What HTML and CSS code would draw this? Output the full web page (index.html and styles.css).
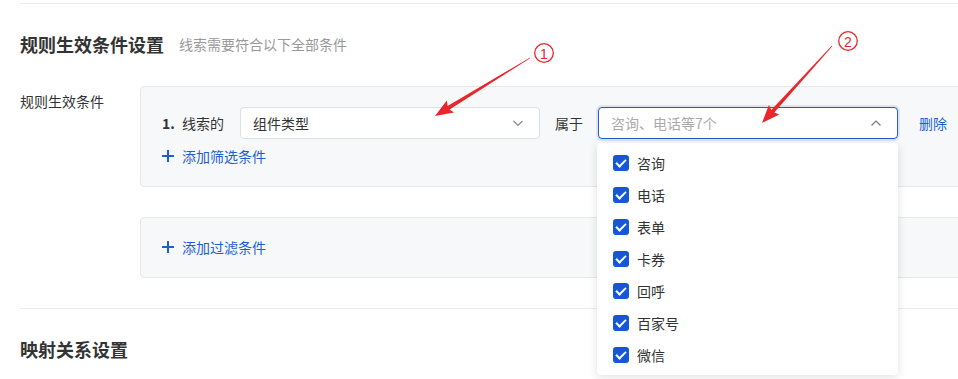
FILE: index.html
```html
<!DOCTYPE html>
<html>
<head>
    <title>规则设置</title>
    <link rel="stylesheet" href="styles.css">
</head>
<body>
    <div class="page">
        <div class="divider top"></div>

        <div class="section-head">
            <h2>规则生效条件设置</h2>
            <span class="hint">线索需要符合以下全部条件</span>
        </div>

        <div class="form-row">
            <div class="form-label">规则生效条件</div>
            <div class="form-body">
                <div class="cond-box">
                    <div class="cond-row">
                        <span class="cond-no">1.</span>
                        <span class="cond-text first">线索的</span>
                        <div class="select">
                            <span class="select-value">组件类型</span>
                            <svg class="chevron" width="12" height="12" viewBox="0 0 12 12"><polyline points="1.5,4 6,8.5 10.5,4" fill="none" stroke="#888" stroke-width="1.2"/></svg>
                        </div>
                        <span class="cond-text">属于</span>
                        <div class="select-wrap">
                            <div class="select active">
                                <span class="select-placeholder">咨询、电话等7个</span>
                                <svg class="chevron" width="12" height="12" viewBox="0 0 12 12"><polyline points="1.5,8.5 6,4 10.5,8.5" fill="none" stroke="#777" stroke-width="1.2"/></svg>
                            </div>
                            <ul class="dropdown">
                                <li><span class="checkbox"></span>咨询</li>
                                <li><span class="checkbox"></span>电话</li>
                                <li><span class="checkbox"></span>表单</li>
                                <li><span class="checkbox"></span>卡券</li>
                                <li><span class="checkbox"></span>回呼</li>
                                <li><span class="checkbox"></span>百家号</li>
                                <li><span class="checkbox"></span>微信</li>
                            </ul>
                        </div>
                        <a class="link del">删除</a>
                    </div>
                    <a class="link add"><span class="plus"></span>添加筛选条件</a>
                </div>

                <div class="cond-box filter">
                    <a class="link add"><span class="plus"></span>添加过滤条件</a>
                </div>
            </div>
        </div>

        <div class="divider"></div>

        <div class="section-head second">
            <h2>映射关系设置</h2>
        </div>

        <!-- annotation arrows drawn over the screenshot -->
        <svg class="marks" width="958" height="379" viewBox="0 0 958 379">
            <polygon fill="#e8262b" points="530.2,58.3 449.6,109.4 454.0,112.6 435,116 446.8,100.6 447.6,106.0 529.8,57.7"/>
            <polygon fill="#e8262b" points="832.3,46.3 774.3,112.5 779.3,114.4 762,123 768.9,105.0 771.3,109.9 831.7,45.7"/>
            <circle cx="544" cy="53" r="9.3" fill="none" stroke="#e8262b" stroke-width="1.3"/>
            <text x="544" y="58.5" class="mark-num">1</text>
            <circle cx="848" cy="41" r="9.3" fill="none" stroke="#e8262b" stroke-width="1.3"/>
            <text x="848" y="46.5" class="mark-num">2</text>
        </svg>
    </div>
</body>
</html>
```

FILE: styles.css
```css
html, body { margin: 0; height: 379px; overflow: hidden; }
body { font-family: "Noto Sans CJK SC", "Noto Sans", sans-serif; color: #333; font-size: 14px; background: #fff; }
.page { position: relative; box-sizing: border-box; width: 958px; height: 379px; overflow: hidden; padding-left: 20px; }
.divider { height: 1px; background: #ebebeb; margin-top: 30px; }
.divider.top { margin-top: 3px; }

.section-head { display: flex; align-items: center; height: 24px; margin-top: 28px; }
.section-head h2 { margin: 0; font-size: 18px; line-height: 24px; font-weight: bold; color: #333; }
.section-head .hint { margin-left: 15px; color: #999; font-size: 14px; }

.form-row { display: flex; margin-top: 30px; }
.form-label { width: 120px; flex: none; padding-top: 4px; line-height: 22px; }
.form-body { flex: 1; margin-right: -40px; }

.cond-box { background: #f7f8fa; border: 1px solid #e6e8eb; border-radius: 4px; padding: 20px 20px 19px 21px; }
.cond-box.filter { margin-top: 30px; padding-top: 18px; padding-bottom: 19px; }
.cond-row { display: flex; align-items: center; height: 32px; margin-bottom: 6px; }
.cond-no { font-weight: bold; width: 20px; }
.cond-text { margin-right: 15px; }
.cond-text.first { margin-right: 16px; }

.select { box-sizing: border-box; width: 300px; height: 32px; background: #fff; border: 1px solid #dcdfe6; border-radius: 4px; display: flex; align-items: center; justify-content: space-between; padding: 0 15px 0 12px; margin-right: 15px; }
.select.active { border-color: #1f5ccc; box-shadow: 0 0 0 2px rgba(31, 92, 204, 0.12); }
.select-placeholder { color: #aaa; }
.select-wrap { position: relative; }
.select-wrap .select { margin-right: 21px; width: 300px; }

.dropdown { position: absolute; top: 36px; left: -1px; width: 301px; margin: 0; padding: 4px 0; list-style: none; background: #fff; border-radius: 4px; box-shadow: 0 2px 10px rgba(0, 0, 0, 0.12); z-index: 2; }
.dropdown li { display: flex; align-items: center; height: 32px; padding-left: 16px; }
.checkbox { width: 16px; height: 16px; border-radius: 3px; background: #1558d6; margin-right: 8px; position: relative; }
.checkbox::after { content: ""; position: absolute; left: 5px; top: 2px; width: 4px; height: 8px; border: solid #fff; border-width: 0 2px 2px 0; transform: rotate(45deg); }

.link { color: #1e5fcf; cursor: pointer; line-height: 22px; }
.add { display: inline-flex; align-items: center; }
.plus { position: relative; width: 12px; height: 12px; margin-right: 8px; }
.plus::before, .plus::after { content: ""; position: absolute; background: #1e5fcf; }
.plus::before { left: 0; top: 5px; width: 12px; height: 2px; }
.plus::after { left: 5px; top: 0; width: 2px; height: 12px; }

.marks { position: absolute; left: 0; top: 0; pointer-events: none; z-index: 5; }
.mark-num { fill: #e8262b; font-family: "Liberation Sans", sans-serif; font-size: 14px; text-anchor: middle; }
```
